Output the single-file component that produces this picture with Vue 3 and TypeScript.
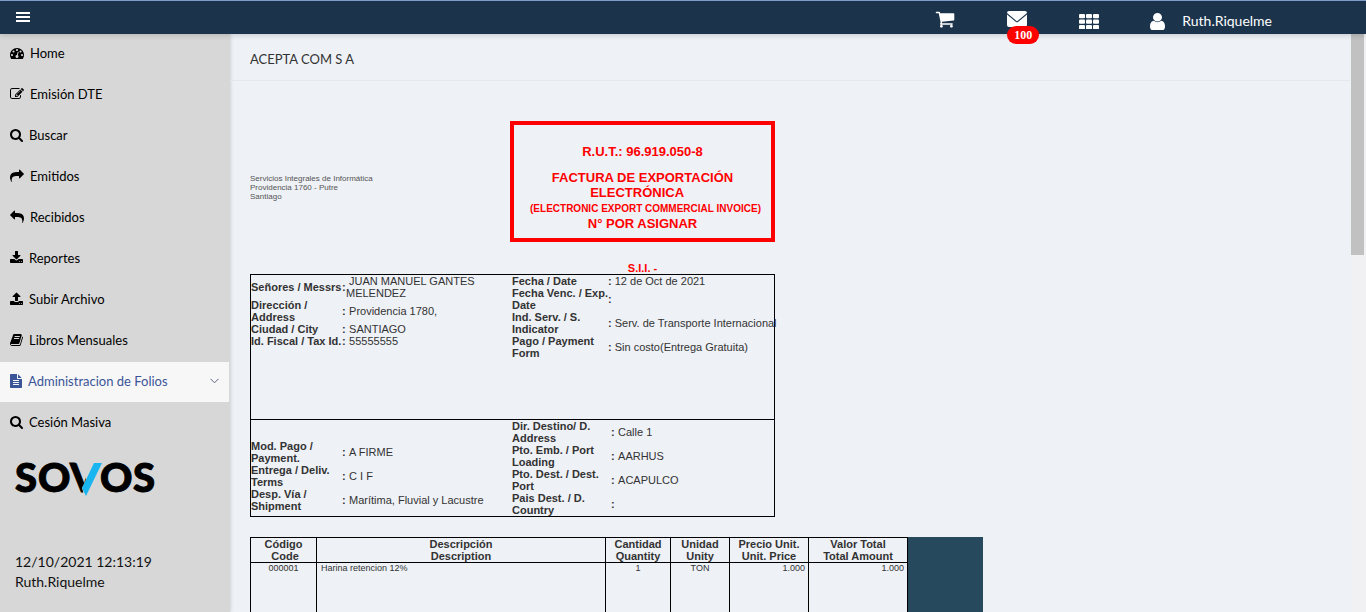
<script setup lang="ts">
import { ref } from 'vue'

interface Icon { box: string; width: number; d: string; flip?: boolean }
interface MenuItem { label: string; icon: keyof typeof icons; active?: boolean }
interface Field { label: string; value: string }

const icons = {
  dashboard: { box: '0 0 1792 1792', width: 14, d: 'M384 1152q0-53-37.5-90.5t-90.5-37.5-90.5 37.5-37.5 90.5 37.5 90.5 90.5 37.5 90.5-37.5 37.5-90.5zm192-448q0-53-37.5-90.5t-90.5-37.5-90.5 37.5-37.5 90.5 37.5 90.5 90.5 37.5 90.5-37.5 37.5-90.5zm428 481l101-382q6-26-7.5-48.5t-38.5-29.5-48 6.5-30 39.5l-101 382q-60 5-107 43.5t-63 98.5q-20 77 20 146t117 89 146-20 89-117q16-60-6-117t-72-91zm660-33q0-53-37.5-90.5t-90.5-37.5-90.5 37.5-37.5 90.5 37.5 90.5 90.5 37.5 90.5-37.5 37.5-90.5zm-640-640q0-53-37.5-90.5t-90.5-37.5-90.5 37.5-37.5 90.5 37.5 90.5 90.5 37.5 90.5-37.5 37.5-90.5zm448 192q0-53-37.5-90.5t-90.5-37.5-90.5 37.5-37.5 90.5 37.5 90.5 90.5 37.5 90.5-37.5 37.5-90.5zm320 448q0 261-141 483-19 29-54 29h-1402q-35 0-54-29-141-221-141-483 0-182 71-348t191-286 286-191 348-71 348 71 286 191 191 286 71 348z' },
  edit: { box: '0 0 1792 1792', width: 14, d: 'M888 1184l116-116-152-152-116 116v56h96v96h56zm440-720q-16-16-33 1l-350 350q-17 17-1 33t33-1l350-350q17-17 1-33zm80 594v190q0 119-84.5 203.5t-203.5 84.5h-832q-119 0-203.5-84.5t-84.5-203.5v-832q0-119 84.5-203.5t203.5-84.5h832q63 0 117 25 15 7 18 23 3 17-9 29l-49 49q-14 14-32 8-23-6-45-6h-832q-66 0-113 47t-47 113v832q0 66 47 113t113 47h832q66 0 113-47t47-113v-126q0-13 9-22l64-64q15-15 35-7t20 29zm-96-738l288 288-672 672h-288v-288zm444 132l-92 92-288-288 92-92q28-28 68-28t68 28l152 152q28 28 28 68t-28 68z' },
  search: { box: '64 0 1664 1792', width: 13, d: 'M1216 832q0-185-131.5-316.5t-316.5-131.5-316.5 131.5-131.5 316.5 131.5 316.5 316.5 131.5 316.5-131.5 131.5-316.5zm512 832q0 52-38 90t-90 38q-54 0-90-38l-343-342q-179 124-399 124-143 0-273.5-55.5t-225-150-150-225-55.5-273.5 55.5-273.5 150-225 225-150 273.5-55.5 273.5 55.5 225 150 150 225 55.5 273.5q0 220-124 399l343 343q37 37 37 90z' },
  share: { box: '0 0 1792 1792', width: 14, d: 'M1792 640q0 26-19 45l-512 512q-19 19-45 19t-45-19-19-45v-256h-224q-98 0-175.5 6t-154 21.5-133 42.5-105.5 69.5-80 101-48.5 138.5-17.5 181q0 55 5 123 0 6 2.5 23.5t2.5 26.5q0 15-8.5 25t-23.5 10q-16 0-28-17-7-9-13-22t-13.5-30-10.5-24q-127-285-127-451 0-199 53-333 162-403 875-403h224v-256q0-26 19-45t45-19 45 19l512 512q19 19 19 45z' },
  reply: { box: '0 0 1792 1792', width: 14, flip: true, d: 'M1792 640q0 26-19 45l-512 512q-19 19-45 19t-45-19-19-45v-256h-224q-98 0-175.5 6t-154 21.5-133 42.5-105.5 69.5-80 101-48.5 138.5-17.5 181q0 55 5 123 0 6 2.5 23.5t2.5 26.5q0 15-8.5 25t-23.5 10q-16 0-28-17-7-9-13-22t-13.5-30-10.5-24q-127-285-127-451 0-199 53-333 162-403 875-403h224v-256q0-26 19-45t45-19 45 19l512 512q19 19 19 45z' },
  download: { box: '64 0 1664 1792', width: 13, d: 'M1344 1344q0-26-19-45t-45-19-45 19-19 45 19 45 45 19 45-19 19-45zm256 0q0-26-19-45t-45-19-45 19-19 45 19 45 45 19 45-19 19-45zm128-224v320q0 40-28 68t-68 28h-1472q-40 0-68-28t-28-68v-320q0-40 28-68t68-28h465l135 136q58 56 136 56t136-56l136-136h464q40 0 68 28t28 68zm-325-569q17 41-14 70l-448 448q-18 19-45 19t-45-19l-448-448q-31-29-14-70 17-39 59-39h256v-448q0-26 19-45t45-19h256q26 0 45 19t19 45v448h256q42 0 59 39z' },
  upload: { box: '64 0 1664 1792', width: 13, d: 'M1344 1472q0-26-19-45t-45-19-45 19-19 45 19 45 45 19 45-19 19-45zm256 0q0-26-19-45t-45-19-45 19-19 45 19 45 45 19 45-19 19-45zm128-224v320q0 40-28 68t-68 28h-1472q-40 0-68-28t-28-68v-320q0-40 28-68t68-28h427q21 56 70.5 92t110.5 36h256q61 0 110.5-36t70.5-92h427q40 0 68 28t28 68zm-325-648q-17 40-59 40h-256v448q0 26-19 45t-45 19h-256q-26 0-45-19t-19-45v-448h-256q-42 0-59-40-17-39 14-69l448-448q18-19 45-19t45 19l448 448q31 30 14 69z' },
  book: { box: '64 0 1664 1792', width: 13, d: 'M1703 478q40 57 18 129l-275 906q-19 64-76.5 107.5t-122.5 43.5h-923q-77 0-148.5-53.5t-99.5-131.5q-24-67-2-127 0-4 3-27t4-37q1-8-3-21.5t-3-19.5q2-11 8-21t16.5-23.5 16.5-23.5q23-38 45-91.5t30-91.5q3-10 .5-30t-.5-28q3-11 17-28t17-23q21-36 42-92t25-90q1-9-2.5-32t.5-28q4-13 22-30.5t22-22.5q19-26 42.5-84.5t27.5-96.5q1-8-3-25.5t-2-26.5q2-8 9-18t18-23 17-21q8-12 16.5-30.5t15-35 16-36 19.5-32 26.5-23.5 36-11.5 47.5 5.5l-1 3q38-9 51-9h761q74 0 114 56t18 130l-274 906q-36 119-71.5 153.5t-128.5 34.5h-869q-27 0-38 15-11 16-1 43 24 70 144 70h923q29 0 56-15.5t35-41.5l300-987q7-22 5-57 38 15 59 43zm-1064 2q-4 13 2 22.5t20 9.5h608q13 0 25.5-9.5t16.5-22.5l21-64q4-13-2-22.5t-20-9.5h-608q-13 0-25.5 9.5t-16.5 22.5zm-83 256q-4 13 2 22.5t20 9.5h608q13 0 25.5-9.5t16.5-22.5l21-64q4-13-2-22.5t-20-9.5h-608q-13 0-25.5 9.5t-16.5 22.5z' },
  file: { box: '128 0 1536 1792', width: 12, d: 'M1596 476q14 14 28 36h-472v-472q22 14 36 28zm-476 164h544v1056q0 40-28 68t-68 28h-1344q-40 0-68-28t-28-68v-1600q0-40 28-68t68-28h800v544q0 40 28 68t68 28zm160 736v-64q0-14-9-23t-23-9h-704q-14 0-23 9t-9 23v64q0 14 9 23t23 9h704q14 0 23-9t9-23zm0-256v-64q0-14-9-23t-23-9h-704q-14 0-23 9t-9 23v64q0 14 9 23t23 9h704q14 0 23-9t9-23zm0-256v-64q0-14-9-23t-23-9h-704q-14 0-23 9t-9 23v64q0 14 9 23t23 9h704q14 0 23-9t9-23z' },
} satisfies Record<string, Icon>

const iconOf = (name: keyof typeof icons): Icon => icons[name]

const menu = ref<MenuItem[]>([
  { label: 'Home', icon: 'dashboard' },
  { label: 'Emisión DTE', icon: 'edit' },
  { label: 'Buscar', icon: 'search' },
  { label: 'Emitidos', icon: 'share' },
  { label: 'Recibidos', icon: 'reply' },
  { label: 'Reportes', icon: 'download' },
  { label: 'Subir Archivo', icon: 'upload' },
  { label: 'Libros Mensuales', icon: 'book' },
  { label: 'Administracion de Folios', icon: 'file', active: true },
  { label: 'Cesión Masiva', icon: 'search' },
])

const parties: { receiver: Field[]; dates: Field[]; terms: Field[]; destination: Field[] } = {
  receiver: [
    { label: 'Señores / Messrs', value: 'JUAN MANUEL GANTES\nMELENDEZ' },
    { label: 'Dirección /\nAddress', value: 'Providencia 1780,' },
    { label: 'Ciudad / City', value: 'SANTIAGO' },
    { label: 'Id. Fiscal / Tax Id.', value: '55555555' },
  ],
  dates: [
    { label: 'Fecha / Date', value: '12 de Oct de 2021' },
    { label: 'Fecha Venc. / Exp.\nDate', value: '' },
    { label: 'Ind. Serv. / S.\nIndicator', value: 'Serv. de Transporte Internacional' },
    { label: 'Pago / Payment\nForm', value: 'Sin costo(Entrega Gratuita)' },
  ],
  terms: [
    { label: 'Mod. Pago /\nPayment.', value: 'A FIRME' },
    { label: 'Entrega / Deliv.\nTerms', value: 'C I F' },
    { label: 'Desp. Vía /\nShipment', value: 'Marítima, Fluvial y Lacustre' },
  ],
  destination: [
    { label: 'Dir. Destino/ D.\nAddress', value: 'Calle 1' },
    { label: 'Pto. Emb. / Port\nLoading', value: 'AARHUS' },
    { label: 'Pto. Dest. / Dest.\nPort', value: 'ACAPULCO' },
    { label: 'Pais Dest. / D.\nCountry', value: '' },
  ],
}

const blocks = [
  [parties.receiver, parties.dates],
  [parties.terms, parties.destination],
]
</script>

<template>
  <div class="shell">
    <header class="topbar">
      <button class="bar-btn burger" type="button" aria-label="Menu">
        <svg width="14" height="12" viewBox="0 0 14 12" fill="currentColor"><rect width="14" height="2" /><rect y="4" width="14" height="2" /><rect y="8" width="14" height="2" /></svg>
      </button>
      <nav class="tools">
        <button class="bar-btn cart" type="button" aria-label="Carro">
          <svg width="20" height="20" viewBox="0 0 1792 1792" fill="currentColor"><path d="M704 1536q0 52-38 90t-90 38-90-38-38-90 38-90 90-38 90 38 38 90zm896 0q0 52-38 90t-90 38-90-38-38-90 38-90 90-38 90 38 38 90zm128-1088v512q0 24-16.5 42.5t-40.5 21.5l-1044 122q13 60 13 70 0 16-24 64h920q26 0 45 19t19 45-19 45-45 19h-1024q-26 0-45-19t-19-45q0-11 8-31.5t16-36 21.5-40 15.5-29.5l-177-823h-204q-26 0-45-19t-19-45 19-45 45-19h256q16 0 28.5 6.5t19.5 15.5 13 24.5 8 26 5.5 29.5 4.5 26h1201q26 0 45 19t19 45z" /></svg>
        </button>
        <button class="bar-btn mail" type="button" aria-label="Mensajes">
          <svg width="20" height="16" viewBox="0 0 20 16" fill="currentColor"><path d="M2 0h16q2 0 2 2L10.5 10q-.5 .4-1 0L0 2Q0 0 2 0zM0 3.5L9 11q1 .7 2 0l9-7.500V14q0 2-2 2H2q-2 0-2-2z" /></svg>
          <span class="badge">100</span>
        </button>
        <button class="bar-btn grid" type="button" aria-label="Aplicaciones">
          <svg width="20" height="15" viewBox="0 0 20 15" fill="currentColor"><template v-for="r in 3" :key="r"><rect v-for="c in 3" :key="c" :x="(c - 1) * 7" :y="(r - 1) * 5.5" width="6" height="4.2" rx="1" /></template></svg>
        </button>
        <button class="bar-btn user" type="button">
          <svg width="15" height="17" viewBox="256 128 1280 1536" preserveAspectRatio="none" fill="currentColor"><path d="M1536 1399q0 109-62.500 187t-150.500 78h-854q-88 0-150.500-78t-62.500-187q0-85 8.500-160.500t31.500-152 58.500-131 94-89 134.500-34.500q131 128 313 128t313-128q76 0 134.500 34.500t94 89 58.500 131 31.500 152 8.500 160.500zm-256-887q0 159-112.500 271.500t-271.500 112.500-271.500-112.500-112.500-271.500 112.500-271.500 271.500-112.500 271.500 112.500 112.500 271.500z" /></svg>
          <span class="user-name">Ruth.Riquelme</span>
        </button>
      </nav>
    </header>

    <div class="body">
      <aside class="sidebar">
        <nav class="menu">
          <a v-for="item in menu" :key="item.label" href="#" class="menu-item" :class="{ active: item.active }">
            <svg :width="iconOf(item.icon).width" height="14" :viewBox="iconOf(item.icon).box" fill="currentColor" aria-hidden="true">
              <path :d="iconOf(item.icon).d" :transform="iconOf(item.icon).flip ? 'translate(1792 0) scale(-1 1)' : undefined" />
            </svg>
            <span>{{ item.label }}</span>
            <svg v-if="item.active" class="chevron" width="9" height="6" viewBox="0 0 9 6" fill="none" stroke="currentColor"><path d="M.5 .8L4.5 4.8 8.5 .8" /></svg>
          </a>
        </nav>
        <svg class="logo" width="142" height="36" viewBox="0 0 142 36" role="img" aria-label="Sovos">
          <clipPath id="left-arm"><path d="M50 0H72V19L68 27 70 34H50z" /></clipPath>
          <g class="logo-text">
            <text x="1" y="31">S</text>
            <text x="24" y="31">O</text>
            <text x="56" y="31" clip-path="url(#left-arm)">V</text>
            <text x="86" y="31">O</text>
            <text x="119" y="31">S</text>
          </g>
          <path d="M80 2H88L72 35 68 27z" fill="#19b5f1" />
        </svg>
        <p class="session">12/10/2021 12:13:19<br>Ruth.Riquelme</p>
      </aside>

      <main class="content">
        <h1 class="company">ACEPTA COM S A</h1>

        <article class="invoice">
          <div class="head">
            <address class="issuer">Servicios Integrales de Informática<br>Providencia 1760 - Putre<br>Santiago</address>
            <div class="folio">
              <div class="folio-box">
                <p class="rut">R.U.T.: 96.919.050-8</p>
                <p>FACTURA DE EXPORTACIÓN<br>ELECTRÓNICA&nbsp;&nbsp;&nbsp;</p>
                <p class="folio-sub">(ELECTRONIC EXPORT COMMERCIAL INVOICE)</p>
                <p>N° POR ASIGNAR</p>
              </div>
              <p class="sii">S.I.I. -</p>
            </div>
          </div>

          <div class="parties">
            <section v-for="(block, b) in blocks" :key="b" class="party-row">
              <table v-for="(fields, t) in block" :key="t" class="fields">
                <tbody>
                  <tr v-for="f in fields" :key="f.label">
                    <th scope="row">{{ f.label }}</th>
                    <td class="colon">:</td>
                    <td>&nbsp;{{ f.value }}</td>
                  </tr>
                </tbody>
              </table>
            </section>
          </div>

          <div class="items-wrap">
            <table class="items">
              <colgroup><col class="c-code"><col class="c-desc"><col class="c-qty"><col class="c-unit"><col class="c-price"><col class="c-total"></colgroup>
              <thead>
                <tr>
                  <th>Código<br>&nbsp;Code</th>
                  <th>Descripción<br>Description</th>
                  <th>Cantidad<br>Quantity</th>
                  <th>Unidad<br>Unity</th>
                  <th>Precio Unit.<br>Unit. Price</th>
                  <th>Valor Total<br>Total Amount</th>
                </tr>
              </thead>
              <tbody>
                <tr>
                  <td>000001</td>
                  <td class="left">Harina retencion 12%</td>
                  <td>1</td>
                  <td>TON</td>
                  <td class="right">1.000</td>
                  <td class="right">1.000</td>
                </tr>
              </tbody>
            </table>
          </div>
        </article>
      </main>
      <div class="scroll-track" aria-hidden="true"><div class="scroll-thumb"></div></div>
    </div>
  </div>
</template>

<style>
body { margin: 0; background: #eef1f6; }
</style>

<style scoped>
.shell { display: flex; flex-direction: column; height: 100vh; overflow: hidden; font-family: Lato, "Open Sans", sans-serif; font-size: 13px; color: #111; }
p, h1 { margin: 0; }

.topbar { display: flex; align-items: center; justify-content: space-between; flex: none; height: 34px; box-sizing: border-box; padding: 0 94px 0 16px; background: #1b344c; border-top: 1px solid #7f9bcb; color: #fff; box-shadow: 0 1px 6px rgba(0, 0, 0, .18); position: relative; z-index: 1; }
.bar-btn { display: flex; align-items: center; position: relative; border: 0; padding: 0; background: none; color: inherit; font: inherit; }
.tools { display: flex; align-items: center; height: 100%; }
.cart { margin-right: 52px; padding-top: 2px; }
.mail { margin-right: 52px; padding-top: 2px; }
.grid { margin-right: 51px; padding-top: 8px; }
.user { gap: 17px; padding-top: 8px; font-size: 14px; }
.user-name { padding-bottom: 3px; }
.badge { position: absolute; left: 0; top: 17px; width: 32px; border-radius: 9px; background: #f00; color: #fff; font: bold 12px/18px "Liberation Serif", serif; text-align: center; }

.body { display: flex; flex: 1; min-height: 0; }
.sidebar { flex: none; width: 230px; background: #d7d7d7; box-shadow: 0 0 4px rgba(0, 0, 0, .2); overflow: hidden; }
.menu { display: flex; flex-direction: column; gap: 1px; margin-right: 1px; }
.menu-item { display: flex; align-items: center; gap: 6px; height: 40px; box-sizing: border-box; padding: 0 10px 2px; color: #000; text-decoration: none; }
.menu-item span { padding-bottom: 1px; }
.menu-item.active { background: #f7f7f7; color: #3c5598; }
.chevron { margin-left: auto; color: #5a6486; }
.logo { display: block; overflow: visible; margin: 18px 0 0 14px; }
.logo-text { font: 900 40px Lato, sans-serif; fill: #000; stroke: #000; stroke-width: 1px; }
.session { margin: 55px 0 0 15px; font-size: 14px; line-height: 20px; }

.content { flex: 1; min-width: 0; overflow: hidden; color: #333; }
.company { padding: 16px 20px 12px; line-height: 18px; font-size: 13px; font-weight: 400; border-bottom: 1px solid #e5e7ea; }
.invoice { margin: 40px 20px 0; width: 733px; font-family: "Liberation Sans", Arial, sans-serif; font-size: 11px; line-height: 12px; }
.head { display: flex; justify-content: space-between; width: 525px; }
.issuer { padding-top: 53px; font-size: 8px; line-height: 9px; font-style: normal; color: #555; }
.folio { width: 265px; color: #f00; font-weight: bold; text-align: center; }
.folio-box { border: 4px solid #f00; padding: 19px 0 7px; font-size: 13px; line-height: 15px; }
.rut { margin-bottom: 11px; }
.folio-sub { padding: 2px 0 0 6px; font-size: 10px; line-height: 14px; white-space: nowrap; }
.sii { margin-top: 20px; }

.parties { width: 525px; box-sizing: border-box; border: 1px solid #000; }
.party-row { display: grid; grid-template-columns: 261px 262px; align-items: start; min-height: 96px; }
.party-row:first-child { min-height: 144px; border-bottom: 1px solid #000; }
.party-row:last-child .fields:first-child { margin-top: 20px; }
.fields { border-collapse: collapse; }
.fields th, .fields td { padding: 0; text-align: left; vertical-align: middle; white-space: pre; }
.fields th { width: 91px; }
.fields:last-child th { width: 99px; }
.fields .colon { width: 4px; font-weight: bold; }

.items-wrap { margin-top: 20px; width: 733px; background: #27495e; }
.items { width: 658px; height: 200px; table-layout: fixed; border-collapse: collapse; background: #eef1f6; }
.c-code { width: 66px; }
.c-desc { width: 289px; }
.c-qty { width: 65px; }
.c-unit { width: 59px; }
.c-price { width: 79px; }
.c-total { width: 99px; }
.items th, .items td { border: 1px solid #000; padding: 0; text-align: center; vertical-align: top; }
.items th { height: 24px; }
.items td { font-size: 9px; line-height: 10px; }
.items .left { text-align: left; padding-left: 4px; }
.items .right { text-align: right; padding-right: 3px; }

.scroll-track { flex: none; width: 14px; margin-left: 1px; padding-right: 1px; background: #f1f1f3; }
.scroll-thumb { width: 13px; height: 221px; background: #c1c1c1; }
</style>
